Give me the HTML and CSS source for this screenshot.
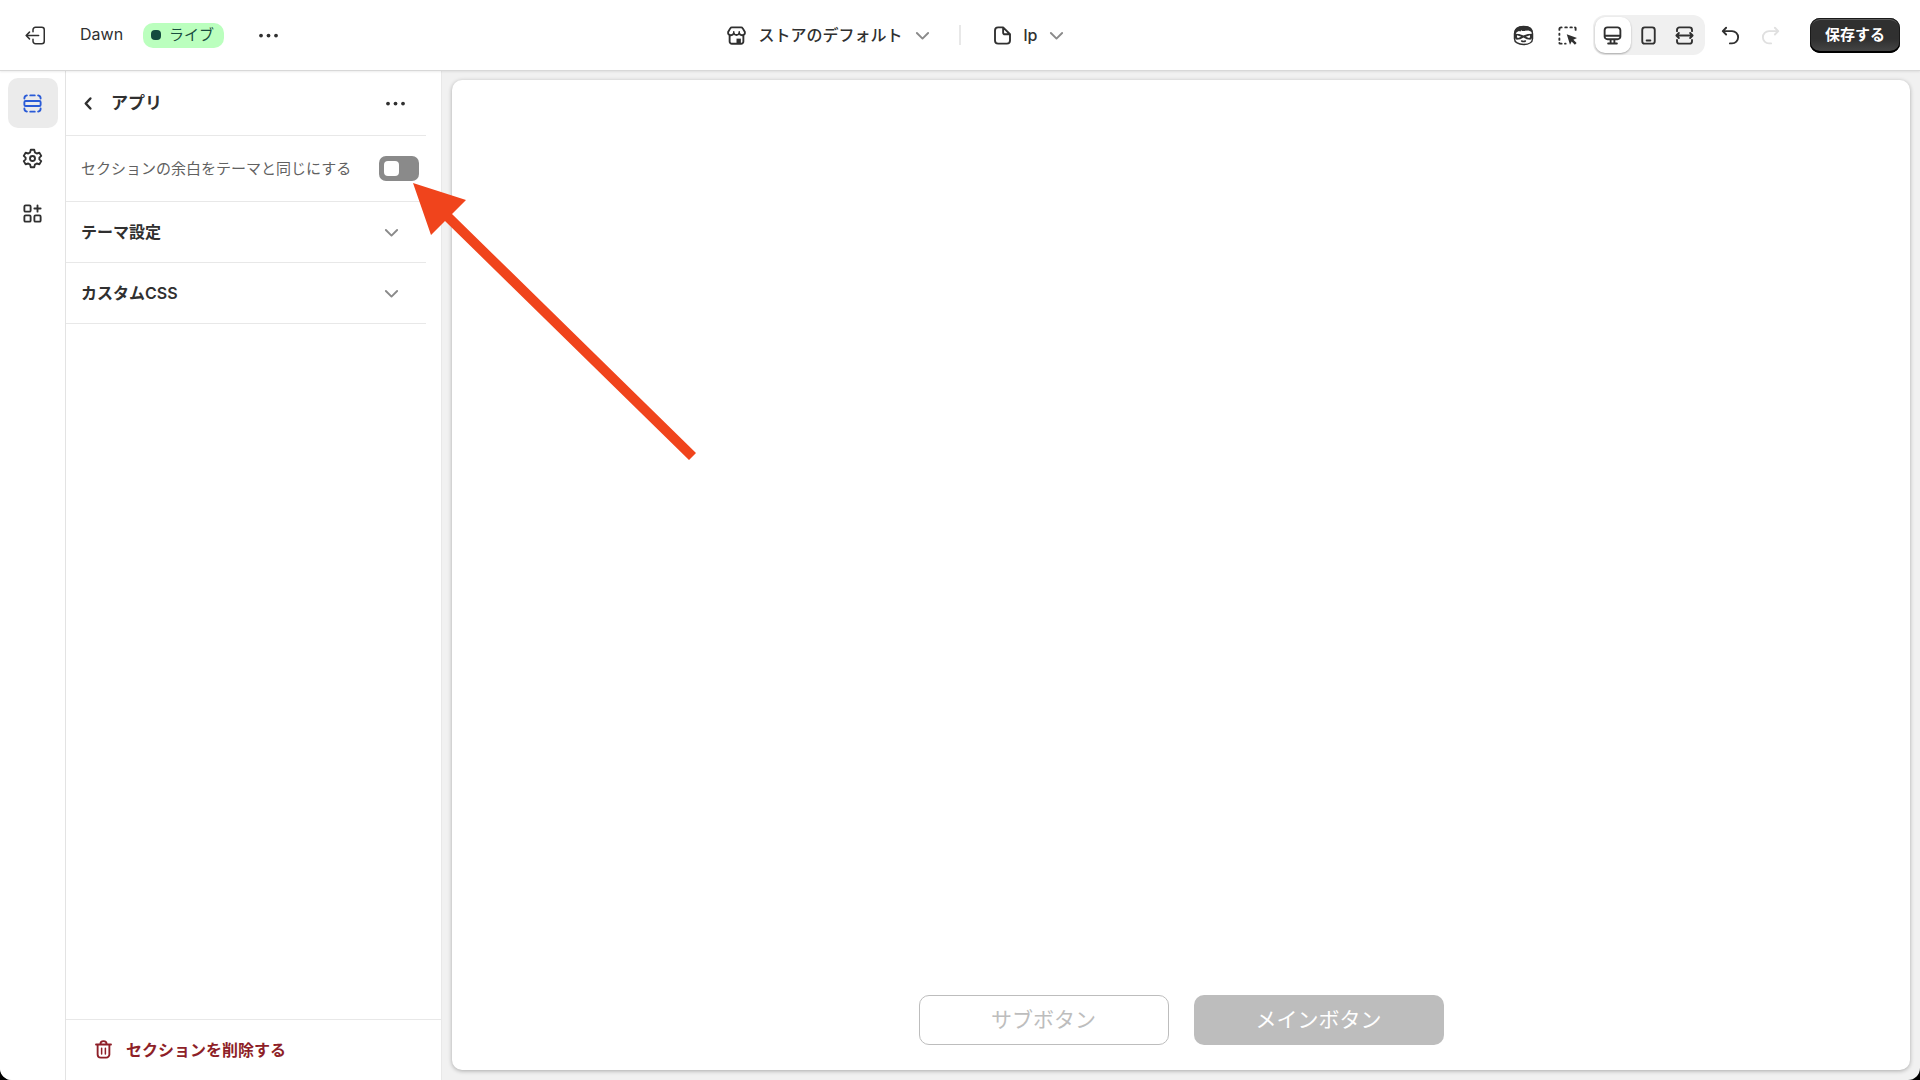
FILE: index.html
```html
<!DOCTYPE html>
<html lang="ja">
<head>
    <meta charset="UTF-8">
    <meta name="viewport" content="width=device-width, initial-scale=1.0">
    <title>Dawn</title>
    <link rel="stylesheet" href="styles.css">
</head>
<body>
    <div class="editor">
        <header class="topbar">
            <div class="topbar-left">
                <a href="#" class="icon-link" aria-label="終了">
                    <svg class="icon" viewBox="0 0 20 20"><path class="thin" d="M8 7V5.400A2 2 0 0 1 10 3.400H15A2 2 0 0 1 17 5.400V14.600A2 2 0 0 1 15 16.600H10A2 2 0 0 1 8 14.600V13M12.500 10H2.500M5.200 7.300 2.500 10 5.200 12.700"/></svg>
                </a>
                <span class="theme-name">Dawn</span>
                <span class="badge"><span class="badge-dot"></span>ライブ</span>
                <button class="icon-btn more-btn" aria-label="その他">
                    <svg class="icon dots" viewBox="0 0 20 20"><circle cx="4" cy="10" r="1.500"/><circle cx="10" cy="10" r="1.500"/><circle cx="16" cy="10" r="1.500"/></svg>
                </button>
            </div>

            <div class="topbar-center">
                <button class="picker">
                    <svg class="icon" viewBox="0 0 20 20"><path d="M4.500 10V14.800A1.800 1.800 0 0 0 6.300 16.600H13.700A1.800 1.800 0 0 0 15.500 14.800V10M6.300 3.500H13.700Q14.500 3.500 15 4.300L16.700 7.200Q17 9.800 14.500 9.800 12.800 9.800 12.200 8.300 11.400 9.600 10 9.600 8.600 9.600 7.800 8.300 7.200 9.800 5.500 9.800 3 9.800 3.300 7.200L5 4.300Q5.500 3.500 6.300 3.500Z"/><path class="thin" d="M7.800 7V8.300M12.200 7V8.300"/><path class="fill" d="M10 16.500V12.500H13.500V16.500Z"/></svg>
                    <span>ストアのデフォルト</span>
                    <svg class="icon chevron" viewBox="0 0 20 20"><path d="M5.500 8 10 12.500 14.500 8"/></svg>
                </button>
                <span class="divider"></span>
                <button class="picker page-picker">
                    <svg class="icon" viewBox="0 0 20 20"><path d="M10.500 3.500H6.500A2.500 2.500 0 0 0 4 6V14A2.500 2.500 0 0 0 6.500 16.500H13.500A2.500 2.500 0 0 0 16 14V9ZM10.500 3.500V7.500A1.500 1.500 0 0 0 12 9H16"/></svg>
                    <span>lp</span>
                    <svg class="icon chevron" viewBox="0 0 20 20"><path d="M5.500 8 10 12.500 14.500 8"/></svg>
                </button>
            </div>

            <div class="topbar-right">
                <div class="tools">
                    <button class="icon-btn" aria-label="アシスタント">
                        <svg class="icon" viewBox="0 0 20 20"><path class="thin" d="M2.800 8.500C2.800 4.800 5.500 2.800 10 2.800S17.200 4.800 17.200 8.500V12.500C17.200 15.500 14 17.200 10 17.200S2.800 15.500 2.800 12.500Z"/><path class="fill" d="M2.500 8.500C2.500 4.500 5.500 2.300 10 2.300S17.200 4.300 17.500 7.600L14 5.900 9 6.400 8.300 5.700 7.500 6.800 6.300 6.400 4.500 7.300 3.800 8.800Z"/><path class="fill" d="M2.500 8.600 6.500 8.700 10 10 13.500 8.700 17.500 8.600V11.500L15.500 13.300 12.500 13 10 11.500 7.500 13 4.500 13.300 2.500 11.500Z"/><path class="eye" d="M4.900 9.800 8.100 10.900 5.600 12 4.700 11.400ZM15.100 9.800 11.900 10.900 14.400 12 15.300 11.400Z"/><path class="thin" d="M8.500 14.400Q10 15.300 11.500 14.400"/></svg>
                    </button>
                    <button class="icon-btn" aria-label="要素を選択">
                        <svg class="icon" viewBox="0 0 20 20"><path d="M3.500 5.500V5A1.500 1.500 0 0 1 5 3.500H5.300M8.200 3.500H9.500M12.300 3.500H13.500M16 3.500A.5.5 0 0 1 16.500 4V5.500M3.500 8.500V9.500M3.500 12.300V13.500M3.500 16A.5.5 0 0 0 4 16.500H5.300M8 16.500H8.500"/><path class="fill" d="M9.400 9 17.600 11.900 14.700 13.400 17.300 16 15.900 17.400 13.300 14.800 12 17.400Z"/></svg>
                    </button>
                </div>
                <div class="devices">
                    <button class="device active" aria-label="デスクトップ">
                        <svg class="icon" viewBox="0 0 20 20"><path d="M6 3.500H14A2.300 2.300 0 0 1 16.300 5.800V10.700A2.300 2.300 0 0 1 14 13H6A2.300 2.300 0 0 1 3.700 10.700V5.800A2.300 2.300 0 0 1 6 3.500ZM4 10.200H16M8.500 13V16M11.500 13V16M6.500 16.400H13.500"/></svg>
                    </button>
                    <button class="device" aria-label="モバイル">
                        <svg class="icon" viewBox="0 0 20 20"><path d="M7 3.500H13A2 2 0 0 1 15 5.500V14.500A2 2 0 0 1 13 16.500H7A2 2 0 0 1 5 14.500V5.500A2 2 0 0 1 7 3.500ZM8.500 14H11.500"/></svg>
                    </button>
                    <button class="device" aria-label="全画面">
                        <svg class="icon" viewBox="0 0 20 20"><path d="M4 6.500V5.500A2 2 0 0 1 6 3.500H14A2 2 0 0 1 16 5.500V6.500M4 13.500V14.500A2 2 0 0 0 6 16.500H14A2 2 0 0 0 16 14.500V13.500M3.500 10H16.500M5.500 8 3.500 10 5.500 12M14.500 8 16.500 10 14.500 12"/></svg>
                    </button>
                </div>
                <div class="history">
                    <button class="icon-btn" aria-label="元に戻す">
                        <svg class="icon" viewBox="0 0 20 20"><path d="M6.500 3.800 3.800 6.500 6.500 9.200M4 6.500H11.200A4.900 4.900 0 0 1 11.200 16.300H9.500"/></svg>
                    </button>
                    <button class="icon-btn redo" aria-label="やり直す" disabled>
                        <svg class="icon" viewBox="0 0 20 20"><path d="M13.500 3.800 16.200 6.500 13.500 9.200M16 6.500H8.800A4.900 4.900 0 0 0 8.800 16.300H10.500"/></svg>
                    </button>
                </div>
                <button class="save-btn">保存する</button>
            </div>
        </header>

        <div class="workspace">
            <nav class="rail">
                <a href="#" class="rail-link active" aria-label="セクション">
                    <svg class="icon" viewBox="0 0 20 20"><path d="M3.500 6A2.500 2.500 0 0 1 5.500 3.500M8.200 3.500H11.800M14.500 3.500A2.500 2.500 0 0 1 16.500 6M3.500 14A2.500 2.500 0 0 0 5.500 16.500M8.200 16.500H11.800M14.500 16.500A2.500 2.500 0 0 0 16.500 14M4.500 8H15.500A1 1 0 0 1 16.500 9V11A1 1 0 0 1 15.500 12H4.500A1 1 0 0 1 3.500 11V9A1 1 0 0 1 4.500 8Z"/></svg>
                </a>
                <a href="#" class="rail-link" aria-label="テーマ設定">
                    <svg class="icon" viewBox="0 0 20 20"><path d="M8.600 3H11.400L11.900 5.100 13.400 6 15.500 5.400 17 7.900 15.500 9.300V10.700L17 12.100 15.500 14.600 13.400 14 11.900 14.900 11.400 17H8.600L8.100 14.900 6.600 14 4.500 14.600 3 12.100 4.500 10.700V9.300L3 7.900 4.500 5.400 6.600 6 8.100 5.100Z"/><circle cx="10" cy="10" r="2"/></svg>
                </a>
                <a href="#" class="rail-link" aria-label="アプリ埋め込み">
                    <svg class="icon" viewBox="0 0 20 20"><path d="M4.500 3.500H7.500A1 1 0 0 1 8.500 4.500V7.500A1 1 0 0 1 7.500 8.500H4.500A1 1 0 0 1 3.500 7.500V4.500A1 1 0 0 1 4.500 3.500ZM4.500 11.500H7.500A1 1 0 0 1 8.500 12.500V15.500A1 1 0 0 1 7.500 16.500H4.500A1 1 0 0 1 3.500 15.500V12.500A1 1 0 0 1 4.500 11.500ZM12.500 11.500H15.500A1 1 0 0 1 16.500 12.500V15.500A1 1 0 0 1 15.500 16.500H12.500A1 1 0 0 1 11.500 15.500V12.500A1 1 0 0 1 12.500 11.500ZM14 3.500V8.500M11.500 6H16.500"/></svg>
                </a>
            </nav>

            <aside class="panel">
                <div class="panel-body">
                    <div class="panel-header">
                        <button class="icon-btn" aria-label="戻る">
                            <svg class="icon" viewBox="0 0 20 20"><path class="bold" d="M11.500 6 7.800 10 11.500 14"/></svg>
                        </button>
                        <h1>アプリ</h1>
                        <button class="icon-btn" aria-label="その他">
                            <svg class="icon dots" viewBox="0 0 20 20"><circle cx="4" cy="10" r="1.500"/><circle cx="10" cy="10" r="1.500"/><circle cx="16" cy="10" r="1.500"/></svg>
                        </button>
                    </div>
                    <div class="setting-row">
                        <label for="spacing">セクションの余白をテーマと同じにする</label>
                        <input type="checkbox" id="spacing" class="toggle">
                    </div>
                    <button class="accordion">
                        <span>テーマ設定</span>
                        <svg class="icon chevron" viewBox="0 0 20 20"><path d="M5.500 8 10 12.500 14.500 8"/></svg>
                    </button>
                    <button class="accordion">
                        <span>カスタムCSS</span>
                        <svg class="icon chevron" viewBox="0 0 20 20"><path d="M5.500 8 10 12.500 14.500 8"/></svg>
                    </button>
                </div>
                <div class="panel-footer">
                    <button class="delete-btn">
                        <svg class="icon" viewBox="0 0 20 20"><path d="M4 6H16M7.500 5.800A2.500 2.500 0 0 1 12.500 5.800M5.300 6V14A2.500 2.500 0 0 0 7.800 16.500H12.200A2.500 2.500 0 0 0 14.700 14V6"/><path class="thin" d="M8.500 9V13.500M11.500 9V13.500"/></svg>
                        <span>セクションを削除する</span>
                    </button>
                </div>
            </aside>

            <main class="canvas">
                <div class="preview">
                    <button class="cta cta-sub">サブボタン</button>
                    <button class="cta cta-main">メインボタン</button>
                </div>
            </main>
        </div>

        <!-- arrow pointing at the toggle -->
        <svg class="pointer" viewBox="0 0 284 278" aria-hidden="true"><path d="M0 0 53 17 39 31 283 270 276 277 32 38 18 52Z"/></svg>
    </div>
</body>
</html>
```

FILE: styles.css
```css
* {
    box-sizing: border-box;
}

body {
    margin: 0;
    background-color: #000;
    color: #303030;
    font-family: Inter, "Noto Sans CJK JP", sans-serif;
    font-size: 16px;
    line-height: 24px;
}

button {
    font: inherit;
    color: inherit;
    background: none;
    border: none;
    padding: 0;
    margin: 0;
    cursor: pointer;
}

.editor {
    position: relative;
    display: flex;
    flex-direction: column;
    min-height: 100vh;
    background-color: #f1f1f1;
    border-radius: 0 0 12px 12px;
    overflow: hidden;
}

/* icons */
.icon {
    display: block;
    width: 25px;
    height: 25px;
    flex-shrink: 0;
    fill: none;
    stroke: currentColor;
    stroke-width: 1.5;
    stroke-linecap: round;
    stroke-linejoin: round;
}

.icon .thin {
    stroke-width: 1.2;
}

.icon .bold {
    stroke-width: 2;
}

.icon .fill {
    fill: currentColor;
    stroke: none;
}

.icon .eye {
    fill: #fff;
    stroke: none;
}

.dots {
    fill: currentColor;
    stroke: none;
}

.chevron {
    color: #8a8a8a;
}

.icon-btn,
.icon-link {
    color: #303030;
}

/* top bar */
.topbar {
    display: flex;
    justify-content: space-between;
    align-items: center;
    height: 71px;
    padding: 0 20px 0 23px;
    background-color: #fff;
    border-bottom: 1px solid #d8d8d8;
    box-shadow: 0 1px 2px rgba(0, 0, 0, 0.08);
    position: relative;
}

.topbar-left,
.topbar-center,
.topbar-right,
.tools,
.history {
    display: flex;
    align-items: center;
}

.theme-name {
    margin: 0 20px 3px 32px;
}

.badge {
    display: flex;
    align-items: center;
    gap: 8px;
    height: 25px;
    padding: 0 10px 0 8px;
    border-radius: 10px;
    background-color: #bbffbe;
    color: #1a4d3f;
    font-size: 15px;
}

.badge-dot {
    width: 10px;
    height: 10px;
    border-radius: 4px;
    background-color: #144a3f;
}

.more-btn {
    margin-left: 32px;
}

.picker {
    display: flex;
    align-items: center;
    gap: 7px;
    font-weight: 500;
}

.picker span {
    margin-left: 3px;
}

.divider {
    width: 2px;
    height: 20px;
    margin: 0 29px 0 24px;
    background-color: #e8e8e8;
}

.page-picker {
    gap: 6px;
}

.topbar-right {
    gap: 13px;
}

.tools {
    gap: 19px;
}

.history {
    gap: 15px;
}

.devices {
    display: flex;
    padding: 2px;
    border-radius: 12px;
    background-color: #f0f0f0;
}

.device {
    padding: 5px;
    width: 36px;
    height: 36px;
    border-radius: 10px;
}

.device.active {
    background-color: #fff;
    box-shadow: 0 1px 2px rgba(0, 0, 0, 0.3);
}

.redo {
    color: #e0e0e0;
}

.save-btn {
    height: 35px;
    padding: 0 15px;
    margin-left: 14px;
    border-radius: 10px;
    background: linear-gradient(#303030 60%, #484848);
    box-shadow: inset 0 -2px 0 #000, inset 0 0 0 1px #1a1a1a, inset 0 2px 0 #5c5c5c;
    color: #fff;
    font-size: 15px;
    font-weight: 600;
}

/* left rail */
.workspace {
    display: flex;
    flex: 1;
}

.rail {
    display: flex;
    flex-direction: column;
    align-items: center;
    gap: 5px;
    width: 66px;
    padding-top: 7px;
    background-color: #fff;
    border-right: 1px solid #e3e3e3;
}

.rail-link {
    display: flex;
    justify-content: center;
    align-items: center;
    width: 50px;
    height: 50px;
    border-radius: 10px;
    color: #303030;
}

.rail-link.active {
    background-color: #ebebeb;
    color: #2a5bd7;
}

/* settings panel */
.panel {
    display: flex;
    flex-direction: column;
    width: 376px;
    background-color: #fff;
    border-right: 1px solid #e8e8e8;
}

.panel-body {
    flex: 1;
    margin-right: 15px;
}

.panel-header {
    display: flex;
    align-items: center;
    height: 65px;
    padding: 0 18px 0 10px;
    border-bottom: 1px solid #e8e8e8;
}

h1 {
    flex: 1;
    margin: 0 0 0 10px;
    font-size: 17px;
    line-height: 24px;
    font-weight: 600;
}

.setting-row {
    display: flex;
    justify-content: space-between;
    align-items: center;
    height: 66px;
    padding: 0 7px 0 15px;
    border-bottom: 1px solid #e8e8e8;
    color: #616161;
    font-size: 15px;
}

.toggle {
    appearance: none;
    display: flex;
    align-items: center;
    width: 40px;
    height: 25px;
    margin: 0;
    padding: 5px;
    border-radius: 7px;
    background-color: #8a8a8a;
    cursor: pointer;
}

.toggle::before {
    content: "";
    width: 15px;
    height: 15px;
    border-radius: 4px;
    background-color: #fff;
}

.toggle:checked {
    justify-content: flex-end;
    background-color: #303030;
}

.accordion {
    display: flex;
    justify-content: space-between;
    align-items: center;
    width: 100%;
    height: 61px;
    padding: 0 22px 0 15px;
    border-bottom: 1px solid #e8e8e8;
    font-weight: 600;
}

.panel-footer {
    padding: 17px 25px 18px;
    border-top: 1px solid #e8e8e8;
}

.delete-btn {
    display: flex;
    align-items: center;
    gap: 10px;
    color: #8e1f28;
    font-weight: 600;
}

/* preview */
.canvas {
    display: flex;
    flex: 1;
    padding: 9px 10px 10px;
}

.preview {
    display: flex;
    flex: 1;
    justify-content: center;
    align-items: flex-end;
    gap: 25px;
    padding-bottom: 25px;
    border-radius: 10px;
    background-color: #fff;
    box-shadow: 0 1px 4px rgba(0, 0, 0, 0.3);
}

.cta {
    width: 250px;
    height: 50px;
    border-radius: 10px;
    font-size: 21px;
}

.cta-sub {
    border: 1px solid #bdbdbd;
    color: #bdbdbd;
}

.cta-main {
    background-color: #bdbdbd;
    color: #fff;
}

.pointer {
    position: absolute;
    top: 183px;
    left: 413px;
    width: 284px;
    height: 278px;
    fill: #f0441c;
    pointer-events: none;
}
```
